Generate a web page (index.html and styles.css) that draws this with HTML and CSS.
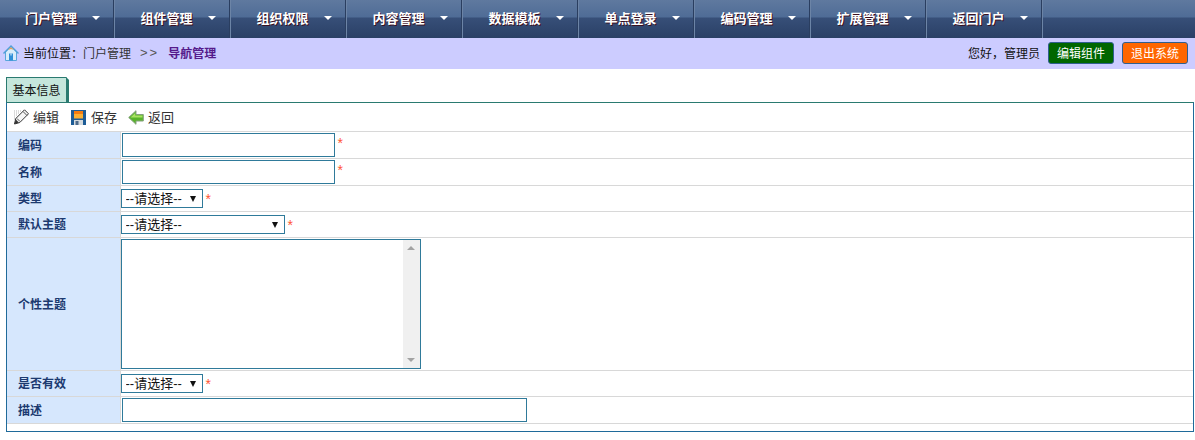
FILE: index.html
```html
<!DOCTYPE html>
<html lang="zh-CN">
<head>
<meta charset="utf-8">
<title>导航管理</title>
<link rel="stylesheet" href="styles.css">
</head>
<body>
<nav class="nav">
  <a class="nav-item">门户管理<i class="caret"></i></a>
  <a class="nav-item">组件管理<i class="caret"></i></a>
  <a class="nav-item">组织权限<i class="caret"></i></a>
  <a class="nav-item">内容管理<i class="caret"></i></a>
  <a class="nav-item">数据模板<i class="caret"></i></a>
  <a class="nav-item">单点登录<i class="caret"></i></a>
  <a class="nav-item">编码管理<i class="caret"></i></a>
  <a class="nav-item">扩展管理<i class="caret"></i></a>
  <a class="nav-item">返回门户<i class="caret"></i></a>
</nav>
<header class="crumbs">
  <svg class="home" width="16" height="16" viewBox="0 0 16 16"><path d="M8 1.5 L2.5 7 L2.5 15.5 L13.5 15.5 L13.5 7 Z" fill="#d8ecfa" stroke="#5aa6dc"/><path d="M.5 8.5 L8 1 L15.5 8.5" fill="none" stroke="#4f9fd8" stroke-width="1.4"/><path d="M5 5 L8 2.2 L11 5 L8 4 Z" fill="#f0a050"/><rect x="6" y="8.5" width="4" height="7" fill="#2f8fd8"/><rect x="7.5" y="8.5" width="1" height="2" fill="#e8f4fc"/></svg>
  <span class="crumb-label">当前位置：</span><span class="crumb-text">门户管理</span>
  <span class="crumb-sep">&gt;&gt;</span>
  <strong class="crumb-now">导航管理</strong>
  <span class="spacer"></span>
  <span class="hello">您好，管理员</span>
  <button class="btn btn-green">编辑组件</button>
  <button class="btn btn-orange">退出系统</button>
</header>
<main class="content">
  <div class="tabs"><span class="tab">基本信息</span></div>
  <section class="panel">
    <div class="toolbar">
      <span class="tool"><svg width="16" height="16" viewBox="0 0 16 16"><path d="M1 2 H8 M1 4 H6 M1 6 H4 M1 8 H3 M1 10 H2" stroke="#b5b5b5" stroke-dasharray="1 1"/><path d="M1.5 15 L2.8 9.5 L11.5 .8 L15.5 4.8 L6.8 13.5 Z" fill="#f6f6f6" stroke="#333"/><path d="M1.5 15 L2.8 10.5 L5.8 13.5 Z" fill="#333"/><path d="M10 2.5 L14 6.5 M4 9.5 L7 12.5" stroke="#555"/></svg>编辑</span>
      <span class="tool tool-save"><svg width="15" height="15" viewBox="0 0 15 15"><rect width="15" height="15" fill="#1d5c96"/><rect x="3" y="1" width="9" height="7.5" fill="#fbb034"/><rect x="3" y="1" width="9" height="3" fill="#f47c10"/><rect x="3" y="10" width="9" height="5" fill="#d4dade"/><rect x="4.5" y="11" width="3" height="4" fill="#4d6a8a"/></svg>保存</span>
      <span class="tool"><svg width="16" height="15" viewBox="0 0 16 15"><path d="M.7 7.5 L8 .7 L8 4.5 L15.3 4.5 L15.3 11 L8 11 L8 14.3 Z" fill="#58b42a" stroke="#86a07e"/><path d="M2.5 7.5 L7.2 3 L7.2 5.5 L14.5 5.5 L14.5 7.5 Z" fill="#a8e262"/></svg>返回</span>
    </div>
    <table class="form">
      <tr class="r27"><th>编码</th><td><input class="input w212" type="text"><span class="req">*</span></td></tr>
      <tr class="r27"><th>名称</th><td><input class="input w212" type="text"><span class="req">*</span></td></tr>
      <tr class="r26"><th>类型</th><td><span class="sel-wrap"><select class="sel s82"><option>--请选择--</option></select></span><span class="req">*</span></td></tr>
      <tr class="r26"><th>默认主题</th><td><span class="sel-wrap"><select class="sel s164"><option>--请选择--</option></select></span><span class="req">*</span></td></tr>
      <tr class="r133"><th>个性主题</th><td><div class="area-wrap"><textarea class="area"></textarea><div class="sbar"><i class="sb-up"></i><i class="sb-down"></i></div></div></td></tr>
      <tr class="r26"><th>是否有效</th><td><span class="sel-wrap"><select class="sel s82"><option>--请选择--</option></select></span><span class="req">*</span></td></tr>
      <tr class="r27"><th>描述</th><td><input class="input w404" type="text"></td></tr>
    </table>
  </section>
</main>
</body>
</html>
```

FILE: styles.css
```css
* { box-sizing: border-box; }
html, body { margin: 0; padding: 0; background: #fff; }
body { font: 12px/1.2 "Noto Sans CJK SC", "Liberation Sans", sans-serif; color: #222; height: 440px; overflow: hidden; }

.nav { display: flex; height: 38px; background: linear-gradient(#5f799f 0, #4f6c96 17px, #374f78 18px, #2a4066 38px); }
.nav-item { width: 116px; height: 38px; display: flex; align-items: center; justify-content: center; padding: 0 0 3px 11px; gap: 15px; color: #fff; font-weight: 700; font-size: 13px; text-shadow: 1px 1px 0 #3a1020; border-right: 1px solid #6c84a6; box-shadow: inset -1px 0 0 #2a3e60; }
.nav-item:first-child { width: 115px; padding-left: 11px; }
.caret { width: 0; height: 0; border: 4px solid transparent; border-top: 4px solid #fff; border-bottom: 0; }

.crumbs { display: flex; align-items: center; height: 31px; background: #ccccff; padding: 0 7px 1px 3px; font-size: 12px; }
.home { margin-right: 4px; }
.crumb-label { color: #111; }
.crumb-text { color: #333; }
.crumb-sep { color: #555; margin: 0 9px; font-size: 13px; letter-spacing: 2px; font-family: "Liberation Sans", sans-serif; }
.crumb-now { color: #551a8b; }
.spacer { flex: 1; }
.hello { color: #111; margin-right: 8px; }
.btn { height: 22px; width: 66px; padding: 0; margin-left: 8px; border: 1px solid #2f5f8f; border-radius: 3px; color: #fff; font: 12px/1 "Noto Sans CJK SC", sans-serif; }
.hello + .btn { margin-left: 0; }
.btn-green { background: #006600; }
.btn-orange { background: #ff6600; }

.content { padding: 8px 1px 0 6px; }
.tabs { display: flex; height: 25px; }
.tab { width: 63px; background: #c5e6dc; border: 1px solid #2a7a70; border-right-width: 3px; border-bottom: 0; display: flex; align-items: center; justify-content: center; color: #111; font-size: 12px; clip-path: polygon(0 0, calc(100% - 3px) 0, 100% 3px, 100% 100%, 0 100%); }
.panel { border: 1px solid #1f6a9a; border-top-color: #2a7a70; height: 330px; }
.toolbar { display: flex; align-items: center; height: 28px; padding: 0 0 0 6px; gap: 12px; font-size: 13px; color: #333; }
.tool { display: flex; align-items: center; gap: 4px; }
.tool-save { gap: 5px; margin-right: -1px; }

.form { width: 100%; border-collapse: collapse; table-layout: fixed; }
.form th, .form td { border-top: 1px solid #d8d8d8; border-bottom: 1px solid #d8d8d8; padding: 0; }
.form th { width: 113px; background: #d6e7fd; border-right: 1px solid #d8d8d8; text-align: left; padding-left: 11px; color: #1c3a70; font-size: 12px; font-weight: 700; }
.form td { line-height: 0; }
.r27 { height: 27px; }
.r26 { height: 26px; }
.r133 { height: 133px; }
.input { height: 24px; border: 1px solid #2f7a9a; padding: 0 2px; margin: 0 0 0 1px; vertical-align: top; background: #fff; outline: none; }
.w212 { width: 213px; }
.w404 { width: 405px; }
.sel-wrap { display: inline-block; position: relative; vertical-align: top; }
.sel-wrap::after { content: ""; position: absolute; top: 7px; right: 7px; border: 3.5px solid transparent; border-top: 6px solid #111; border-bottom: 0; pointer-events: none; }
.sel { display: block; height: 19px; border: 1px solid #2f7a9a; background: #fff; color: #111; font: 13px/15px "Liberation Sans", "Noto Sans CJK SC", sans-serif; padding: 0 0 1px 4px; border-radius: 0; appearance: none; -webkit-appearance: none; outline: none; }
.s82 { width: 82px; }
.s164 { width: 164px; }
.req { display: inline-block; color: #ff5533; font: 14px/14px "Liberation Sans", sans-serif; margin-left: 3px; padding-top: 3px; vertical-align: top; }
.area-wrap { display: flex; width: 300px; height: 130px; border: 1px solid #2f7a9a; background: #fff; }
.area { flex: 1; min-width: 0; border: 0; padding: 2px; margin: 0; resize: none; background: #fff; outline: none; }
.sbar { width: 17px; background: #f0f0f0; display: flex; flex-direction: column; justify-content: space-between; align-items: center; padding: 6px 0 6px; }
.sb-up { border: 4px solid transparent; border-top: 0; border-bottom: 4px solid #a3a3a3; }
.sb-down { border: 4px solid transparent; border-bottom: 0; border-top: 4px solid #a3a3a3; }
```
